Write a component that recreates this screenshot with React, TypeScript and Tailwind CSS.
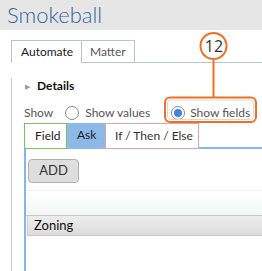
import React from "react";

export default function App() {
  return (
    <div
      className="relative w-[262px] h-[271px] overflow-hidden bg-white whitespace-nowrap"
      style={{ fontFamily: "Lato, 'Noto Sans', sans-serif" }}
    >
      <div className="h-[30px] bg-[#e6e6e6] pl-[7px] text-[22px] leading-[30px] font-light text-[#33679f]">
        Smokeball
      </div>
      <div className="pt-[10px] pl-[11px]">
        <div className="flex h-[23px] text-[12px] leading-[22px]">
          <div className="shrink-0 w-[71px] border-l border-t border-r border-[#b3c5d9] pl-[9px] text-[#1a1a1a]">
            Automate
          </div>
          <div className="shrink-0 w-[53px] border-t border-r border-b border-[#b3c5d9] pl-[8px] text-[#555]">
            Matter
          </div>
          <div className="flex-1 border-b border-[#b3c5d9]" />
        </div>
        <div className="border-l border-[#c3ccd8] pl-[12px] h-[208px]">
          <div className="mt-[15px] h-[16px] flex items-center text-[12px] text-[#111]">
            <span className="text-[7px] text-[#999] ml-[1px] mr-[7px]">▶</span>
            <span className="font-bold">Details</span>
          </div>
          <div className="mt-[9px] h-[20px] flex items-center text-[12px] text-[#555]">
            <span className="shrink-0">Show</span>
            <span className="shrink-0 ml-[12px] w-[14px] h-[14px] rounded-full border border-[#8a8a8a] bg-white" />
            <span className="shrink-0 ml-[6px]">Show values</span>
            <span className="shrink-0 ml-[21px] w-[14px] h-[14px] rounded-full border border-[#8a8a8a] bg-white flex items-center justify-center">
              <span className="w-[8px] h-[8px] rounded-full bg-[#3d86e0]" />
            </span>
            <span className="shrink-0 ml-[5px]">Show fields</span>
          </div>
          <div className="flex h-[26px] text-[12px] leading-[24px] text-[#222]">
            <div className="shrink-0 w-[43px] border border-[#7dc35e] pl-[10px]">Field</div>
            <div className="shrink-0 w-[38px] bg-[#8cb9e8] border-b border-[#8cb9e8] pl-[10px]">Ask</div>
            <div className="shrink-0 w-[94px] border border-[#e3a3a3] pl-[9px] text-[#333]">If / Then / Else</div>
            <div className="flex-1 border-b-2 border-[#83b7ec]" />
          </div>
          <div className="border-l-2 border-[#83b7ec] h-[200px]">
            <div className="pt-[10px] pl-[2px]">
              <div className="w-[51px] h-[24px] rounded-[4px] border border-[#b0b0b0] bg-[#dedede] flex items-center justify-center text-[13px] text-[#333]">
                ADD
              </div>
            </div>
            <div className="mt-[7px] h-[26px] border-t border-[#efefef] bg-gradient-to-b from-white to-[#f4f5f5] border-b border-b-[#c6c6c6]" />
            <div className="ml-[1px] h-[20px] border-l border-[#cfcfcf] border-b border-b-[#c6c6c6] bg-gradient-to-b from-[#ededed] to-[#dcdcdc] pl-[6px] text-[13px] leading-[19px] text-[#111]">
              Zoning
            </div>
          </div>
        </div>
      </div>

      {/* annotation overlay */}
      <svg className="absolute left-0 top-0" width="262" height="271">
        <line x1="213.5" y1="60" x2="213.5" y2="97" stroke="#f07020" strokeWidth="2" />
        <circle cx="213.5" cy="46" r="13" fill="white" stroke="#f07020" strokeWidth="2" />
        <rect x="165" y="97.5" width="91" height="24.5" rx="5" fill="none" stroke="#f07020" strokeWidth="2" />
        <rect x="167.5" y="100" width="86" height="19.5" rx="3" fill="none" stroke="#d9d9d9" strokeWidth="1" />
      </svg>
      <div
        className="absolute left-[200px] top-[33px] w-[28px] h-[26px] flex items-center justify-center text-[16px] text-[#333]"
        style={{ fontFamily: "'Open Sans', sans-serif" }}
      >
        12
      </div>
    </div>
  );
}
